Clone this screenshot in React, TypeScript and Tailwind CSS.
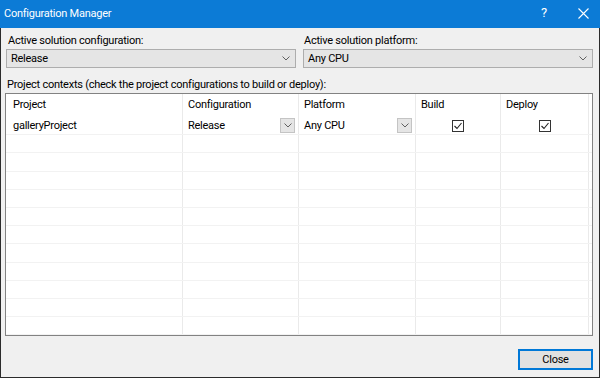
import React from "react";

const font = { fontFamily: '"Segoe UI", Roboto, "Liberation Sans", sans-serif' };

function Chevron({ className = "" }: { className?: string }) {
  return (
    <svg width="8" height="5" viewBox="0 0 8 5" className={className}>
      <path d="M0.5 0.5 L4 4 L7.5 0.5" fill="none" stroke="#606060" strokeWidth="1" />
    </svg>
  );
}

function Check() {
  return (
    <div className="w-[12px] h-[12px] border border-[#333333] bg-white flex items-center justify-center">
      <svg width="10" height="10" viewBox="0 0 10 10">
        <path d="M1.5 5 L4 7.5 L8.5 2" fill="none" stroke="#222222" strokeWidth="1.1" />
      </svg>
    </div>
  );
}

function CellDrop({ text }: { text: string }) {
  return (
    <div className="flex items-center justify-between h-full pl-[5px] pr-[3px]">
      <span className="pt-[1px]">{text}</span>
      <div className="w-[15px] h-[15px] bg-[#e5e5e5] border border-[#c4c4c4] flex items-center justify-center">
        <Chevron />
      </div>
    </div>
  );
}

export default function App() {
  const cols = ["w-[177px]", "w-[116px]", "w-[117px]", "w-[85px]", "w-[88px]"];
  const emptyRows = Array.from({ length: 11 });
  return (
    <div className="w-[600px] h-[378px] flex flex-col text-[11px] tracking-[-0.25px] text-black" style={font}>
      <div className="h-[28px] bg-[#0c7bd6] flex items-center justify-between text-white">
        <span className="pl-[4px]">Configuration Manager</span>
        <div className="flex items-center">
          <span className="text-[13px] pb-[2px] mr-[31px]">?</span>
          <svg width="11" height="11" viewBox="0 0 11 11" className="mr-[11px] mb-[1px]">
            <path d="M0.5 0.5 L10.5 10.5 M10.5 0.5 L0.5 10.5" stroke="#ffffff" strokeWidth="1.1" />
          </svg>
        </div>
      </div>
      <div className="flex-1 flex flex-col bg-[#f0f0f0] border-l border-r border-b border-[#2b2b2b]">
        <div className="flex gap-[7px] pl-[5px] pt-[4px]">
          <div className="w-[290px] flex flex-col">
            <div className="h-[16px] leading-[16px] pt-[1px] pl-[2px]">Active solution configuration:</div>
            <div className="mt-[1px] h-[19px] bg-[#e5e5e5] border border-[#adadad] flex items-center justify-between pl-[4px] pr-[5px]">
              <span className="pt-[1px]">Release</span>
              <Chevron />
            </div>
          </div>
          <div className="w-[290px] flex flex-col">
            <div className="h-[16px] leading-[16px] pt-[1px] pl-[1px]">Active solution platform:</div>
            <div className="mt-[1px] h-[19px] bg-[#e5e5e5] border border-[#adadad] flex items-center justify-between pl-[4px] pr-[5px]">
              <span className="pt-[1px]">Any CPU</span>
              <Chevron />
            </div>
          </div>
        </div>
        <div className="mt-[8px] pl-[6px] h-[16px] leading-[16px] pt-[1px]">
          Project contexts (check the project configurations to build or deploy):
        </div>
        <div className="ml-[4px] mt-[1px] w-[588px] h-[243px] border border-[#828282] bg-white overflow-hidden">
          <div className="flex h-[23px]">
            <div className={`${cols[0]} border-r border-[#eaeaea] pl-[7px] flex items-center`}>Project</div>
            <div className={`${cols[1]} border-r border-[#eaeaea] pl-[5px] flex items-center`}>Configuration</div>
            <div className={`${cols[2]} border-r border-[#eaeaea] pl-[5px] flex items-center`}>Platform</div>
            <div className={`${cols[3]} border-r border-[#eaeaea] pl-[5px] flex items-center`}>Build</div>
            <div className={`${cols[4]} border-r border-[#eaeaea] pl-[5px] flex items-center`}>Deploy</div>
          </div>
          <div className="flex h-[18.2px] border-b border-[#f2f2f2]">
            <div className={`${cols[0]} border-r border-[#eaeaea] pl-[7px] pt-[1px] flex items-center`}>galleryProject</div>
            <div className={`${cols[1]} border-r border-[#eaeaea]`}>
              <CellDrop text="Release" />
            </div>
            <div className={`${cols[2]} border-r border-[#eaeaea]`}>
              <CellDrop text="Any CPU" />
            </div>
            <div className={`${cols[3]} border-r border-[#eaeaea] flex items-center justify-center`}>
              <Check />
            </div>
            <div className={`${cols[4]} border-r border-[#eaeaea] flex items-center justify-center`}>
              <Check />
            </div>
          </div>
          {emptyRows.map((_, i) => (
            <div key={i} className="flex h-[18.2px] border-b border-[#f2f2f2]">
              <div className={`${cols[0]} border-r border-[#eaeaea]`} />
              <div className={`${cols[1]} border-r border-[#eaeaea]`} />
              <div className={`${cols[2]} border-r border-[#eaeaea]`} />
              <div className={`${cols[3]} border-r border-[#eaeaea]`} />
              <div className={`${cols[4]} border-r border-[#eaeaea]`} />
            </div>
          ))}
        </div>
        <div className="flex justify-end mt-[13px] pr-[6px]">
          <button className="w-[75px] h-[21px] bg-[#e1e1e1] border-2 border-[#0078d7] flex items-center justify-center leading-none">
            Close
          </button>
        </div>
      </div>
    </div>
  );
}
